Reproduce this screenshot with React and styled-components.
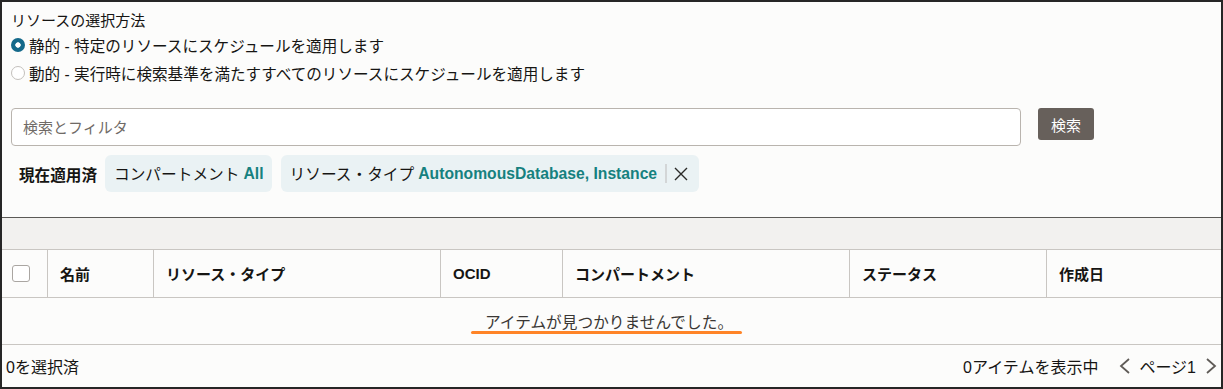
import styled, { createGlobalStyle } from 'styled-components'

const GlobalStyle = createGlobalStyle`
  body {
    margin: 0;
    font-family: "Liberation Sans", "Noto Sans CJK JP", sans-serif;
    color: #161513;
  }
`

const Frame = styled.div`
  width: 1223px;
  height: 389px;
  box-sizing: border-box;
  border: 2px solid #262626;
  background: #fcfcfb;
  display: flex;
  flex-direction: column;
  overflow: hidden;
`

const Top = styled.div`
  padding: 9px 9px 0;
`

const Title = styled.div`
  font-size: 15px;
  line-height: 20px;
`

const RadioRow = styled.label`
  display: flex;
  align-items: center;
  gap: 4px;
  height: 28px;
  font-size: 15.6px;
`

const RadioDot = styled.span`
  width: 14px;
  height: 14px;
  border-radius: 50%;
  box-sizing: border-box;
  flex: none;
  background: ${(p) =>
    p.$checked ? 'radial-gradient(circle, #fff 0 2.4px, #14698a 3px)' : '#fff'};
  border: ${(p) => (p.$checked ? 'none' : '1px solid #c3c0bc')};
`

const SearchRow = styled.div`
  display: flex;
  align-items: flex-start;
  gap: 17px;
  margin-top: 21px;
`

const SearchInput = styled.input`
  width: 1010px;
  height: 38px;
  box-sizing: border-box;
  border: 1px solid #b9b4ae;
  border-radius: 4px;
  padding: 0 11px;
  font: inherit;
  font-size: 15px;
  background: #fff;
  &::placeholder {
    color: #6f6a66;
  }
`

const SearchButton = styled.button`
  width: 56px;
  height: 32px;
  border: none;
  border-radius: 3px;
  background: #67605b;
  color: #fff;
  font: inherit;
  font-size: 15px;
`

const FilterRow = styled.div`
  display: flex;
  align-items: center;
  gap: 9px;
  margin-top: 9px;
  padding-left: 8px;
`

const FilterLabel = styled.span`
  font-size: 15.6px;
  font-weight: bold;
  margin-right: -1px;
`

const Chip = styled.div`
  display: flex;
  align-items: center;
  height: 37px;
  padding: 0 ${(p) => (p.$closable ? '11px' : '8px')} 0 9px;
  border-radius: 6px;
  background: #eaf2f4;
  font-size: 15.7px;
`

const ChipValue = styled.b`
  color: #16817f;
  margin-left: 4px;
`

const ChipDivider = styled.span`
  width: 2px;
  height: 19px;
  background: #d3d6d7;
  margin: 0 7px 0 8px;
`

const Table = styled.div`
  margin-top: 25px;
  border-top: 1px solid #5b5956;
  display: flex;
  flex-direction: column;
  flex: 1;
`

const Band = styled.div`
  height: 31px;
  background: #f2f1ef;
  border-bottom: 1px solid #c9c6c2;
`

const HeaderRow = styled.div`
  display: grid;
  grid-template-columns: 46px 106px 287px 122px 287px 197px 1fr;
  height: 47px;
  border-bottom: 1px solid #c9c6c2;
`

const HeaderCell = styled.div`
  display: flex;
  align-items: center;
  padding-left: ${(p) => (p.$check ? '10px' : '12px')};
  border-right: ${(p) => (p.$last ? 'none' : '1px solid #c9c6c2')};
  font-size: 15px;
  font-weight: bold;
`

const Checkbox = styled.span`
  width: 18px;
  height: 17px;
  box-sizing: border-box;
  border: 1px solid #aaa6a2;
  border-radius: 3px;
  background: #fff;
`

const EmptyRow = styled.div`
  height: 46px;
  border-bottom: 1px solid #c9c6c2;
  display: flex;
  align-items: center;
  justify-content: center;
`

const EmptyText = styled.span`
  position: relative;
  font-size: 15.7px;
  color: #3a3734;
  margin-right: 5px;
  &::after {
    content: '';
    position: absolute;
    left: -14px;
    right: -9px;
    bottom: -1px;
    height: 3px;
    border-radius: 2px;
    background: #ff8427;
  }
`

const Footer = styled.div`
  flex: 1;
  display: flex;
  align-items: center;
  justify-content: space-between;
  padding: 0 3px 0 4px;
  font-size: 16px;
`

const Pager = styled.div`
  display: flex;
  align-items: center;
`

const PageLabel = styled.span`
  margin: 0 8px 0 7px;
`

const Chevron = ({ dir }) => (
  <svg width="14" height="20" viewBox="0 0 14 20" style={{ marginLeft: dir === 'left' ? 20 : 0 }}>
    <polyline
      points={dir === 'left' ? '11,3 3,10 11,17' : '3,3 11,10 3,17'}
      fill="none"
      stroke="#5f5b57"
      strokeWidth="1.8"
    />
  </svg>
)

const CloseIcon = () => (
  <svg width="14" height="14" viewBox="0 0 14 14">
    <path d="M1 1 L13 13 M13 1 L1 13" stroke="#2b2a28" strokeWidth="1.4" />
  </svg>
)

const columns = ['名前', 'リソース・タイプ', 'OCID', 'コンパートメント', 'ステータス', '作成日']

const App = () => {
  return (
    <Frame>
      <GlobalStyle />
      <Top>
        <Title>リソースの選択方法</Title>
        <RadioRow>
          <RadioDot $checked />
          静的 - 特定のリソースにスケジュールを適用します
        </RadioRow>
        <RadioRow>
          <RadioDot />
          動的 - 実行時に検索基準を満たすすべてのリソースにスケジュールを適用します
        </RadioRow>

        <SearchRow>
          <SearchInput placeholder="検索とフィルタ" />
          <SearchButton>検索</SearchButton>
        </SearchRow>

        <FilterRow>
          <FilterLabel>現在適用済</FilterLabel>
          <Chip>
            コンパートメント<ChipValue>All</ChipValue>
          </Chip>
          <Chip $closable>
            リソース・タイプ<ChipValue>AutonomousDatabase, Instance</ChipValue>
            <ChipDivider />
            <CloseIcon />
          </Chip>
        </FilterRow>
      </Top>

      <Table>
        <Band />
        <HeaderRow>
          <HeaderCell $check>
            <Checkbox />
          </HeaderCell>
          {columns.map((c, i) => (
            <HeaderCell key={c} $last={i === columns.length - 1}>
              {c}
            </HeaderCell>
          ))}
        </HeaderRow>
        <EmptyRow>
          <EmptyText>アイテムが見つかりませんでした。</EmptyText>
        </EmptyRow>
        <Footer>
          <span>0を選択済</span>
          <Pager>
            <span>0アイテムを表示中</span>
            <Chevron dir="left" />
            <PageLabel>ページ1</PageLabel>
            <Chevron dir="right" />
          </Pager>
        </Footer>
      </Table>
    </Frame>
  )
}

export default App
